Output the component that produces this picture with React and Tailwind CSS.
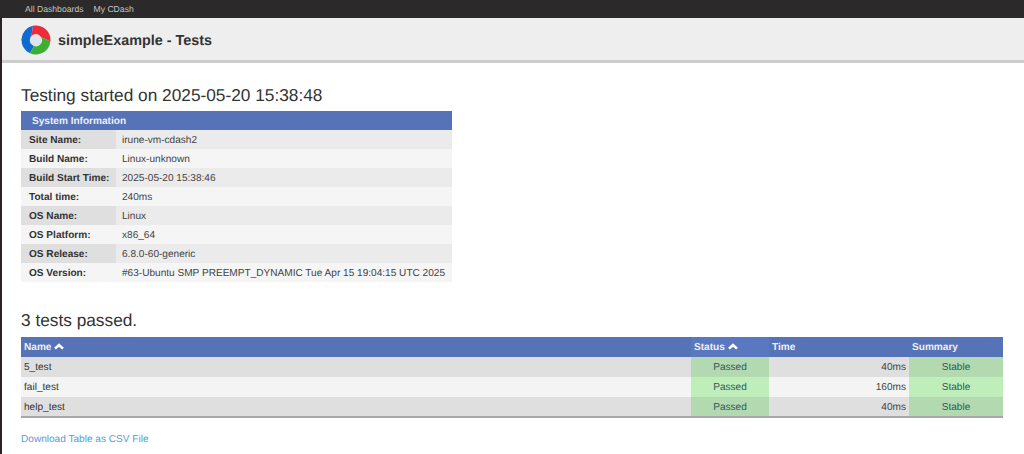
const sysInfo = [
  ['Site Name:', 'irune-vm-cdash2'],
  ['Build Name:', 'Linux-unknown'],
  ['Build Start Time:', '2025-05-20 15:38:46'],
  ['Total time:', '240ms'],
  ['OS Name:', 'Linux'],
  ['OS Platform:', 'x86_64'],
  ['OS Release:', '6.8.0-60-generic'],
  ['OS Version:', '#63-Ubuntu SMP PREEMPT_DYNAMIC Tue Apr 15 19:04:15 UTC 2025'],
];

const tests = [
  { name: '5_test', time: '40ms' },
  { name: 'fail_test', time: '160ms' },
  { name: 'help_test', time: '40ms' },
];

const Chevron = () => (
  <svg viewBox="0 0 10 7" className="ml-[3px] inline-block h-[7px] w-[10px] align-[0px]">
    <path d="M1 5.6 5 2 9 5.6" fill="none" stroke="#fff" strokeWidth="2.6" />
  </svg>
);

const Logo = () => (
  <svg viewBox="0 0 30 30" className="h-[30px] w-[30px]">
    <circle cx="15" cy="15" r="14.5" fill="#e4e6ea" />
    <path d="M12 .8A14.5 14.5 0 0 0 9 28.2L13 21A6.2 6.2 0 0 1 10.4 11Z" fill="#0f6bd0" />
    <path d="M12 .8A14.5 14.5 0 0 1 29.4 16.5L20 12A6 6 0 0 0 10.4 11Z" fill="#ee2b3b" />
    <path d="M29.4 16.5A14.5 14.5 0 0 1 9 28.2L13 21A6 6 0 0 0 20 12Z" fill="#3cb035" />
    <circle cx="15" cy="15.5" r="5" fill="#dfe3ea" />
  </svg>
);

export default function App() {
  return (
    <div className="min-h-[454px] border-l-2 border-[#2a2326] bg-white font-['Liberation_Sans',Arial,sans-serif] text-[#333] [text-rendering:geometricPrecision]">
      <nav className="-ml-[2px] flex h-[18px] items-center gap-[10px] bg-[#2b2929] pl-[25px] pt-[1px] text-[8.64px] text-[#c4c4c4]">
        <span>All Dashboards</span>
        <span>My CDash</span>
      </nav>

      <header className="flex h-[45px] items-center gap-[7px] border-b-[3px] border-[#cdcdcd] bg-[#eeeeee] pl-[19px] pt-[2px]">
        <Logo />
        <h1 className="pt-[3px] text-[14.4px] font-bold text-[#333]">simpleExample - Tests</h1>
      </header>

      <main className="pl-[19px] pr-[20px] text-[10.08px]">
        <h3 className="mt-[21px] mb-[5px] text-[17.28px] leading-[22px]">Testing started on 2025-05-20 15:38:48</h3>

        <table className="w-[431px] border-collapse">
          <thead>
            <tr className="h-[19px] bg-[#5673b8] text-left text-[#f0f0f0]">
              <th colSpan={2} className="pl-[11px] pt-[2px] font-bold">System Information</th>
            </tr>
          </thead>
          <tbody>
            {sysInfo.map(([label, value], i) => (
              <tr key={label} className={`h-[19px] ${i % 2 === 0 ? 'bg-[#ebebeb]' : 'bg-[#f5f5f5]'}`}>
                <th className={`w-[95px] pl-[8px] pt-[2px] text-left font-bold whitespace-nowrap ${i % 2 === 0 ? 'bg-[#dfdfdf]' : ''}`}>{label}</th>
                <td className="pl-[6px] pt-[2px] whitespace-nowrap text-[#444]">{value}</td>
              </tr>
            ))}
          </tbody>
        </table>

        <h3 className="mt-[27px] mb-[6px] text-[17.28px] leading-[22px]">3 tests passed.</h3>

        <table className="w-[982px] table-fixed border-collapse border-b-2 border-[#a8a8a8]">
          <thead>
            <tr className="h-[20px] bg-[#5673b8] text-left font-bold text-[#f0f0f0]">
              <th className="pl-[3px] pt-[1px]">Name<Chevron /></th>
              <th className="w-[78px] bg-[#5a78bf] pl-[3px] pt-[1px]">Status<Chevron /></th>
              <th className="w-[140px] pl-[3px] pt-[1px]">Time</th>
              <th className="w-[94px] pl-[3px] pt-[1px]">Summary</th>
            </tr>
          </thead>
          <tbody>
            {tests.map((test, i) => {
              const odd = i % 2 === 0;
              const green = odd ? 'bg-[#b3d9b0]' : 'bg-[#bfeebb]';
              return (
                <tr key={test.name} className={`h-[20px] ${odd ? 'bg-[#dfdfdf]' : 'bg-[#f4f4f4]'}`}>
                  <td className="pl-[3px] pt-[2px]">{test.name}</td>
                  <td className={`pt-[2px] text-center text-[#2f5a5a] ${green}`}>Passed</td>
                  <td className="pr-[3px] pt-[2px] text-right text-[#444]">{test.time}</td>
                  <td className={`pt-[2px] text-center text-[#2f5a5a] ${green}`}>Stable</td>
                </tr>
              );
            })}
          </tbody>
        </table>

        <a href="#" className="mt-[15px] block leading-[13px] text-[#5b9bd5]">Download Table as CSV File</a>
      </main>
    </div>
  );
}
